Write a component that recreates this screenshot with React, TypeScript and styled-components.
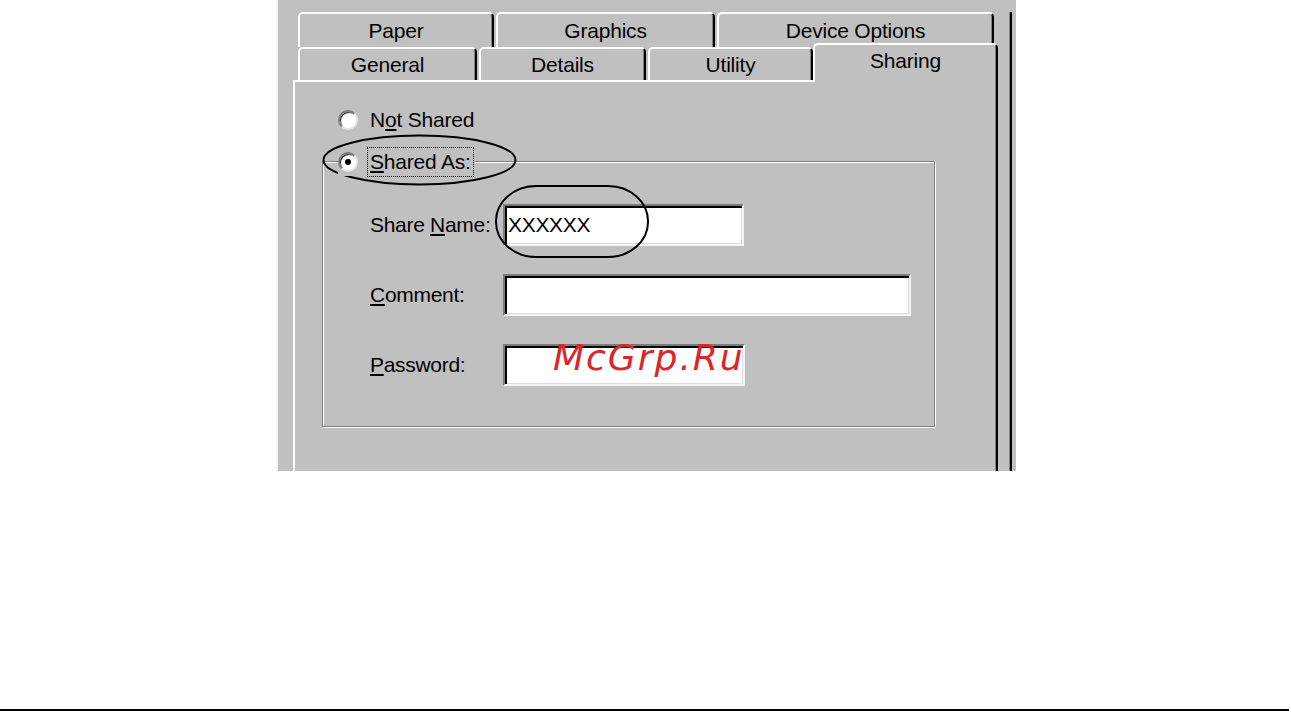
import React from "react";
import styled, { createGlobalStyle } from "styled-components";

const Global = createGlobalStyle`
  html, body { margin: 0; padding: 0; background: #ffffff; }
  #root { width: 1291px; height: 712px; }
`;

const Page = styled.div`
  position: relative;
  width: 1291px;
  height: 712px;
  display: flex;
  flex-direction: column;
  overflow: hidden;
  background: #ffffff;
  font-family: "Liberation Sans", Arial, sans-serif;
  color: #000;
`;

const Dialog = styled.div`
  margin-left: 276px;
  width: 740px;
  height: 471px;
  box-sizing: border-box;
  background: #c0c0c0;
  border-left: 2px solid #f4f4f4;
  padding: 12px 0 0 15px;
  display: flex;
`;

const Sheet = styled.div`
  width: 705px;
  display: flex;
  flex-direction: column;
`;

const FrameEdge = styled.div`
  margin-left: 12px;
  width: 2px;
  background: #000;
  box-shadow: -1px 0 0 #808080;
`;

const TabRow = styled.div<{ $h: number }>`
  height: ${(p) => p.$h}px;
  display: flex;
  align-items: flex-start;
  gap: 2px;
  padding-left: 5px;
`;

const Tab = styled.div<{ $w: number; $h: number; $active?: boolean }>`
  position: relative;
  z-index: ${(p) => (p.$active ? 2 : 0)};
  width: ${(p) => p.$w}px;
  height: ${(p) => p.$h}px;
  box-sizing: border-box;
  margin-top: ${(p) => (p.$active ? -4 : 0)}px;
  margin-left: ${(p) => (p.$active ? -2 : 0)}px;
  padding-bottom: ${(p) => (p.$active ? 6 : 0)}px;
  display: flex;
  align-items: center;
  justify-content: center;
  background: #c0c0c0;
  border-top: 2px solid #ffffff;
  border-left: 2px solid #ffffff;
  border-right: 2px solid #000000;
  box-shadow: inset -1px 0 0 #808080;
  border-radius: 5px 5px 0 0;
  font-size: 21px;
  line-height: 1;
  letter-spacing: -0.2px;
  white-space: nowrap;
`;

const Panel = styled.div`
  flex: 1;
  box-sizing: border-box;
  border-top: 2px solid #ffffff;
  border-left: 2px solid #ffffff;
  border-right: 2px solid #000000;
  box-shadow: inset -1px 0 0 #808080;
  padding: 24px 0 0 27px;
  display: flex;
  flex-direction: column;
  align-items: flex-start;
  gap: 14px;
`;

const RadioRow = styled.div`
  position: relative;
  z-index: 1;
  height: 28px;
  margin-left: 16px;
  padding-right: 2px;
  display: flex;
  align-items: center;
  gap: 12px;
  background: #c0c0c0;
  font-size: 21px;
  letter-spacing: -0.2px;
`;

const Radio = styled.span<{ $checked?: boolean }>`
  position: relative;
  width: 20px;
  height: 20px;
  box-sizing: border-box;
  border-radius: 50%;
  background: #ffffff;
  border: 2px solid;
  border-color: #7c7c7c #e6e6e6 #e6e6e6 #7c7c7c;
  box-shadow: inset 1px 1px 0 #202020;
  &::after {
    content: "";
    display: ${(p) => (p.$checked ? "block" : "none")};
    position: absolute;
    left: 5px;
    top: 5px;
    width: 6px;
    height: 6px;
    border-radius: 50%;
    background: #000;
  }
`;

const RadioText = styled.span<{ $focus?: boolean }>`
  padding: ${(p) => (p.$focus ? "1px 2px" : "0")};
  margin-left: ${(p) => (p.$focus ? -2 : 0)}px;
  outline: ${(p) => (p.$focus ? "1px dotted #000" : "none")};
  line-height: 26px;
`;

const Key = styled.span`
  text-decoration: underline;
  text-underline-offset: 2px;
  text-decoration-thickness: 1.5px;
`;

const GroupBox = styled.div`
  margin-top: -29px;
  width: 613px;
  box-sizing: border-box;
  border: 1px solid #808080;
  box-shadow: inset 1px 1px 0 #ffffff, 1px 1px 0 #ffffff;
  padding: 42px 0 40px 47px;
  display: flex;
  flex-direction: column;
  gap: 28px;
`;

const FieldRow = styled.div`
  height: 42px;
  display: flex;
  align-items: center;
`;

const FieldLabel = styled.span`
  width: 133px;
  font-size: 21px;
  letter-spacing: -0.3px;
  white-space: nowrap;
`;

const TextField = styled.div<{ $w: number }>`
  width: ${(p) => p.$w}px;
  height: 42px;
  box-sizing: border-box;
  background: #ffffff;
  border: 2px solid;
  border-color: #7c7c7c #f4f4f4 #f4f4f4 #7c7c7c;
  box-shadow: inset 2px 2px 0 #000000, inset -1px -1px 0 #dcdcdc;
  padding: 0 0 0 3px;
  display: flex;
  align-items: center;
  font-size: 21px;
  letter-spacing: -0.3px;
`;

const Overlay = styled.svg`
  position: absolute;
  left: 0;
  top: 0;
  pointer-events: none;
`;

const Watermark = styled.div`
  position: absolute;
  left: 553px;
  top: 340px;
  font-family: "DejaVu Sans", "Liberation Sans", sans-serif;
  font-style: italic;
  font-size: 36px;
  line-height: 36px;
  letter-spacing: 2px;
  color: #d8262a;
  white-space: nowrap;
  pointer-events: none;
`;

const Spacer = styled.div`
  flex: 1;
`;

const Rule = styled.div`
  width: 1289px;
  height: 2.5px;
  margin-bottom: 1px;
  background: #000;
`;

const backTabs = [
  { label: "Paper", w: 196 },
  { label: "Graphics", w: 219 },
  { label: "Device Options", w: 277 },
];

const frontTabs = [
  { label: "General", w: 179 },
  { label: "Details", w: 167 },
  { label: "Utility", w: 165 },
  { label: "Sharing", w: 185, active: true },
];

export default function App() {
  return (
    <Page>
      <Global />
      <Dialog>
        <Sheet>
          <TabRow $h={35}>
            {backTabs.map((t) => (
              <Tab key={t.label} $w={t.w} $h={35}>
                {t.label}
              </Tab>
            ))}
          </TabRow>
          <TabRow $h={33}>
            {frontTabs.map((t) => (
              <Tab key={t.label} $w={t.w} $h={t.active ? 39 : 33} $active={t.active}>
                {t.label}
              </Tab>
            ))}
          </TabRow>
          <Panel>
            <RadioRow>
              <Radio />
              <RadioText>
                N<Key>o</Key>t Shared
              </RadioText>
            </RadioRow>
            <RadioRow>
              <Radio $checked />
              <RadioText $focus>
                <Key>S</Key>hared As:
              </RadioText>
            </RadioRow>
            <GroupBox>
              <FieldRow>
                <FieldLabel>
                  Share <Key>N</Key>ame:
                </FieldLabel>
                <TextField $w={241}>XXXXXX</TextField>
              </FieldRow>
              <FieldRow>
                <FieldLabel>
                  <Key>C</Key>omment:
                </FieldLabel>
                <TextField $w={408} />
              </FieldRow>
              <FieldRow>
                <FieldLabel>
                  <Key>P</Key>assword:
                </FieldLabel>
                <TextField $w={242} />
              </FieldRow>
            </GroupBox>
          </Panel>
        </Sheet>
        <FrameEdge />
      </Dialog>
      <Spacer />
      <Rule />
      <Overlay width={1291} height={712} viewBox="0 0 1291 712">
        <ellipse cx={419.5} cy={160} rx={96} ry={24.5} fill="none" stroke="#000" strokeWidth={2} />
        <rect x={496} y={186} width={152} height={71} rx={40} ry={35} fill="none" stroke="#000" strokeWidth={2} />
      </Overlay>
      <Watermark>McGrp.Ru</Watermark>
    </Page>
  );
}
